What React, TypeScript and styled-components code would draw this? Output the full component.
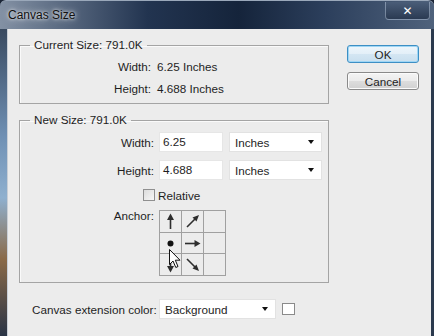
import React from "react";
import styled, { createGlobalStyle } from "styled-components";

const GlobalStyle = createGlobalStyle`
  body {
    margin: 0;
    background: #1b2536;
  }
  * {
    box-sizing: border-box;
  }
`;

const Window = styled.div`
  width: 434px;
  height: 336px;
  display: grid;
  grid-template-rows: 29px 1fr;
  overflow: hidden;
  font-family: "Liberation Sans", Arial, sans-serif;
  font-size: 11.7px;
  color: #1e1e1e;
  background: #1b2536;
`;

const TitleBar = styled.div`
  display: flex;
  justify-content: space-between;
  align-items: flex-start;
  padding: 0 4px 0 8px;
  border-radius: 6px 6px 0 0;
  border-top: 1px solid #9aa8ba;
  background: linear-gradient(
    to right,
    #8391a4 0%,
    #5b6b82 14%,
    #223450 34%,
    #15243b 55%,
    #2c3f5c 75%,
    #4f627c 100%
  );
`;

const Title = styled.span`
  margin-top: 7px;
  font-size: 12px;
  color: #111;
  text-shadow: 0 0 6px rgba(255, 255, 255, 0.9), 0 0 3px rgba(255, 255, 255, 0.8);
`;

const CloseButton = styled.div`
  width: 45px;
  height: 18px;
  margin-top: 1px;
  display: flex;
  align-items: center;
  justify-content: center;
  border: 1px solid rgba(200, 215, 235, 0.45);
  border-top: none;
  border-radius: 0 0 4px 4px;
  background: linear-gradient(to bottom, #4a5d78, #2a3a52);
  color: #fff;
  font-family: "DejaVu Sans", sans-serif;
  font-weight: bold;
  font-size: 12px;
`;

const Body = styled.div`
  display: flex;
`;

const FrameLeft = styled.div`
  width: 8px;
  background: linear-gradient(
    to bottom,
    #3a4a60 0%,
    #6f90b4 35%,
    #8fb0cf 55%,
    #8a6a48 75%,
    #2a3446 100%
  );
  border-right: 1px solid #c8ced6;
`;

const FrameRight = styled.div`
  width: 3px;
  background: #2b3a4e;
`;

const Client = styled.div`
  flex: 1;
  background: #ececec;
  padding: 9px 11px 0 11px;
  display: grid;
  grid-template-columns: 310px 72px;
  column-gap: 18px;
  align-items: start;
`;

const LeftColumn = styled.div`
  display: flex;
  flex-direction: column;
`;

const Group = styled.fieldset<{ $gap?: number }>`
  margin: ${(p) => p.$gap || 0}px 0 0 0;
  padding: 0;
  border: 1px solid #a4a4a4;
  box-shadow: inset 1px 1px 0 #fafafa;
  min-width: 0;
`;

const Legend = styled.legend`
  margin-left: 10px;
  padding: 0 4px;
  line-height: 14px;
`;

const InfoGrid = styled.div`
  display: grid;
  grid-template-columns: 131px auto;
  grid-auto-rows: 22px;
  column-gap: 6px;
  align-items: center;
  padding: 3px 0 4px;
`;

const Label = styled.span`
  text-align: right;
  white-space: nowrap;
`;

const FormGrid = styled.div`
  display: grid;
  grid-template-columns: 134px auto;
  column-gap: 5px;
  row-gap: 8px;
  align-items: center;
  padding: 5px 0 6px;
`;

const Controls = styled.div`
  display: flex;
  gap: 6px;
`;

const TextInput = styled.div`
  width: 64px;
  height: 20px;
  background: #fff;
  border: 1px solid #e6e6e6;
  padding-left: 3px;
  line-height: 18px;
`;

const Select = styled.div<{ $width: number }>`
  width: ${(p) => p.$width}px;
  height: 20px;
  background: #fff;
  border: 1px solid #e2e2e2;
  padding: 0 7px 0 5px;
  display: flex;
  align-items: center;
  justify-content: space-between;
`;

const Caret = styled.span`
  width: 0;
  height: 0;
  border-left: 3.5px solid transparent;
  border-right: 3.5px solid transparent;
  border-top: 4px solid #111;
`;

const CheckRow = styled.label`
  grid-column: 1 / 3;
  display: flex;
  align-items: center;
  gap: 3px;
  padding-left: 123px;
  height: 14px;
`;

const CheckBox = styled.span`
  width: 12px;
  height: 12px;
  border: 1px solid #8f8f8f;
  background: linear-gradient(135deg, #dcdcdc, #f7f7f7);
`;

const AnchorLabel = styled(Label)`
  align-self: start;
  margin-top: -1px;
`;

const AnchorWrap = styled.div`
  position: relative;
  width: 67px;
`;

const AnchorGrid = styled.div`
  display: grid;
  grid-template-columns: repeat(3, 21px);
  grid-template-rows: repeat(3, 20.7px);
  gap: 1px;
  border: 1px solid #a0a0a0;
  background: #a0a0a0;
`;

const Cell = styled.div`
  background: #ececec;
  display: flex;
  align-items: center;
  justify-content: center;
`;

const Cursor = styled.svg`
  position: absolute;
  left: 10px;
  top: 39px;
`;

const BottomRow = styled.div`
  display: flex;
  align-items: center;
  margin-top: 16px;
  padding-left: 13px;
`;

const BottomLabel = styled.span`
  width: 127px;
  white-space: nowrap;
`;

const Swatch = styled.span`
  width: 13px;
  height: 12px;
  margin-left: 6px;
  background: #fff;
  border: 1px solid #8a8a8a;
`;

const ButtonColumn = styled.div`
  display: flex;
  flex-direction: column;
  gap: 9px;
  margin-top: 7px;
`;

const Button = styled.div<{ $default?: boolean }>`
  height: 18px;
  display: flex;
  align-items: center;
  justify-content: center;
  border-radius: 3px;
  border: 1px solid ${(p) => (p.$default ? "#3d8fc4" : "#8a8a8a")};
  box-shadow: ${(p) =>
    p.$default ? "inset 0 0 0 1px #9fd6f5" : "inset 0 0 0 1px #fbfbfb"};
  background: ${(p) =>
    p.$default
      ? "linear-gradient(to bottom, #eef6fc 0%, #e3eff8 50%, #d4e6f3 51%, #c9dfee 100%)"
      : "linear-gradient(to bottom, #f4f4f4 0%, #ebebeb 50%, #dddddd 51%, #d1d1d1 100%)"};
`;

const arrowColor = "#2e2e2e";

const Arrow = ({ d, head }: { d: string; head: string }) => (
  <svg width="21" height="21" viewBox="0 0 21 21">
    <path d={d} stroke={arrowColor} strokeWidth="1.6" fill="none" />
    <polygon points={head} fill={arrowColor} />
  </svg>
);

const anchorCells = [
  <Arrow key="u" d="M10.5 18 L10.5 8" head="10.5,2.5 7,9 14,9" />,
  <Arrow key="ur" d="M5 16 L13.5 7.5" head="17,4 10.5,6.5 14.5,10.5" />,
  null,
  <svg key="c" width="21" height="21" viewBox="0 0 21 21">
    <circle cx="10.5" cy="10.5" r="3" fill="#111" />
  </svg>,
  <Arrow key="r" d="M3 10.5 L13 10.5" head="18.5,10.5 12.5,7 12.5,14" />,
  null,
  <Arrow key="d" d="M10.5 3 L10.5 13" head="10.5,18.5 7,12 14,12" />,
  <Arrow key="dr" d="M5 5 L13.5 13.5" head="17,17 10.5,14.5 14.5,10.5" />,
  null,
];

export default function App() {
  return (
    <>
      <GlobalStyle />
      <Window>
        <TitleBar>
          <Title>Canvas Size</Title>
          <CloseButton>✕</CloseButton>
        </TitleBar>
        <Body>
          <FrameLeft />
          <Client>
            <LeftColumn>
              <Group>
                <Legend>Current Size: 791.0K</Legend>
                <InfoGrid>
                  <Label>Width:</Label>
                  <span>6.25 Inches</span>
                  <Label>Height:</Label>
                  <span>4.688 Inches</span>
                </InfoGrid>
              </Group>
              <Group $gap={9}>
                <Legend>New Size: 791.0K</Legend>
                <FormGrid>
                  <Label>Width:</Label>
                  <Controls>
                    <TextInput>6.25</TextInput>
                    <Select $width={93}>
                      Inches
                      <Caret />
                    </Select>
                  </Controls>
                  <Label>Height:</Label>
                  <Controls>
                    <TextInput>4.688</TextInput>
                    <Select $width={93}>
                      Inches
                      <Caret />
                    </Select>
                  </Controls>
                  <CheckRow>
                    <CheckBox />
                    Relative
                  </CheckRow>
                  <AnchorLabel>Anchor:</AnchorLabel>
                  <AnchorWrap>
                    <AnchorGrid>
                      {anchorCells.map((c, i) => (
                        <Cell key={i}>{c}</Cell>
                      ))}
                    </AnchorGrid>
                    <Cursor width="13" height="20" viewBox="0 0 13 20">
                      <path
                        d="M0.5 0.5 L0.5 15.5 L4 12 L6.8 18.5 L9 17.5 L6.3 11.2 L11 11.2 Z"
                        fill="#fff"
                        stroke="#111"
                        strokeWidth="1"
                      />
                    </Cursor>
                  </AnchorWrap>
                </FormGrid>
              </Group>
              <BottomRow>
                <BottomLabel>Canvas extension color:</BottomLabel>
                <Select $width={117}>
                  Background
                  <Caret />
                </Select>
                <Swatch />
              </BottomRow>
            </LeftColumn>
            <ButtonColumn>
              <Button $default>OK</Button>
              <Button>Cancel</Button>
            </ButtonColumn>
          </Client>
          <FrameRight />
        </Body>
      </Window>
    </>
  );
}
